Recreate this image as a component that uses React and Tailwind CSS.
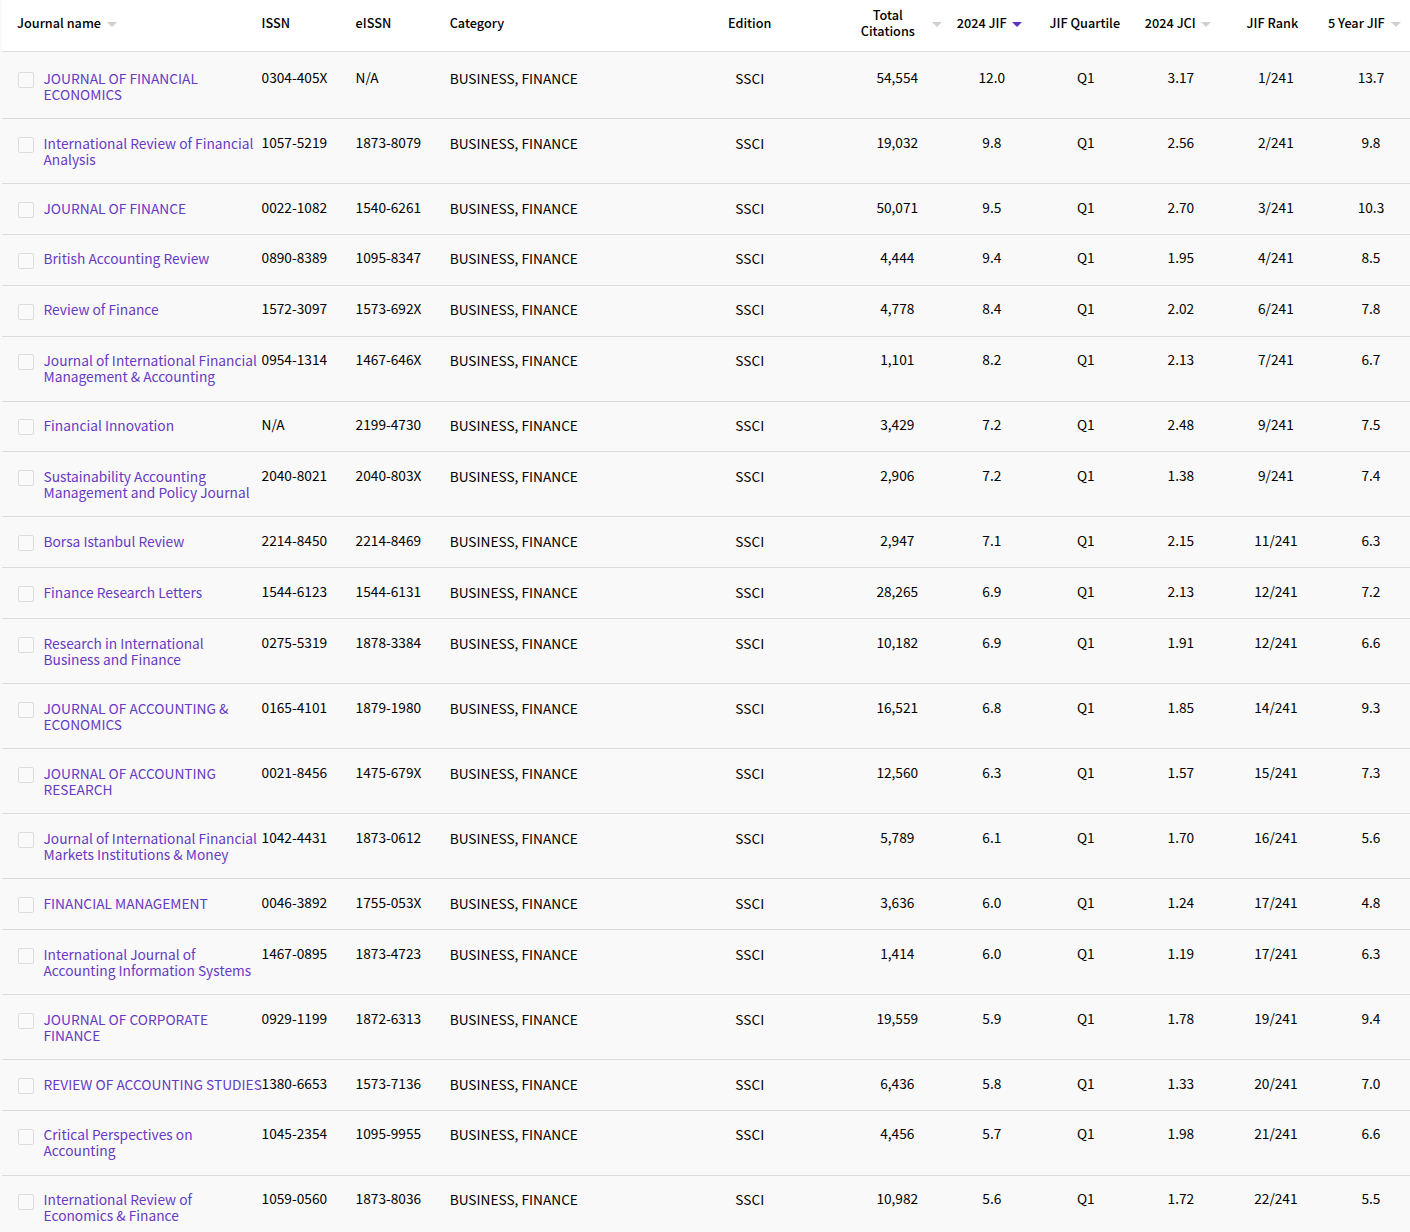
import React from "react";

const rows = [
  ["JOURNAL OF FINANCIAL ECONOMICS", "0304-405X", "N/A", "54,554", "12.0", "3.17", "1/241", "13.7", "h-[67px]", "pt-[17px]"],
  ["International Review of Financial Analysis", "1057-5219", "1873-8079", "19,032", "9.8", "2.56", "2/241", "9.8", "h-[65px]", "pt-[15px]"],
  ["JOURNAL OF FINANCE", "0022-1082", "1540-6261", "50,071", "9.5", "2.70", "3/241", "10.3", "h-[51px]", "pt-[15px]"],
  ["British Accounting Review", "0890-8389", "1095-8347", "4,444", "9.4", "1.95", "4/241", "8.5", "h-[51px]", "pt-[14px]", "mt-[4px]"],
  ["Review of Finance", "1572-3097", "1573-692X", "4,778", "8.4", "2.02", "6/241", "7.8", "h-[51px]", "pt-[14px]", "mt-[4px]"],
  ["Journal of International Financial Management & Accounting", "0954-1314", "1467-646X", "1,101", "8.2", "2.13", "7/241", "6.7", "h-[65px]", "pt-[14px]"],
  ["Financial Innovation", "N/A", "2199-4730", "3,429", "7.2", "2.48", "9/241", "7.5", "h-[50px]", "pt-[14px]"],
  ["Sustainability Accounting Management and Policy Journal", "2040-8021", "2040-803X", "2,906", "7.2", "1.38", "9/241", "7.4", "h-[65px]", "pt-[15px]"],
  ["Borsa Istanbul Review", "2214-8450", "2214-8469", "2,947", "7.1", "2.15", "11/241", "6.3", "h-[51px]", "pt-[15px]"],
  ["Finance Research Letters", "1544-6123", "1544-6131", "28,265", "6.9", "2.13", "12/241", "7.2", "h-[51px]", "pt-[15px]"],
  ["Research in International Business and Finance", "0275-5319", "1878-3384", "10,182", "6.9", "1.91", "12/241", "6.6", "h-[65px]", "pt-[15px]"],
  ["JOURNAL OF ACCOUNTING & ECONOMICS", "0165-4101", "1879-1980", "16,521", "6.8", "1.85", "14/241", "9.3", "h-[65px]", "pt-[15px]"],
  ["JOURNAL OF ACCOUNTING RESEARCH", "0021-8456", "1475-679X", "12,560", "6.3", "1.57", "15/241", "7.3", "h-[65px]", "pt-[15px]"],
  ["Journal of International Financial Markets Institutions & Money", "1042-4431", "1873-0612", "5,789", "6.1", "1.70", "16/241", "5.6", "h-[65px]", "pt-[15px]"],
  ["FINANCIAL MANAGEMENT", "0046-3892", "1755-053X", "3,636", "6.0", "1.24", "17/241", "4.8", "h-[51px]", "pt-[15px]"],
  ["International Journal of Accounting Information Systems", "1467-0895", "1873-4723", "1,414", "6.0", "1.19", "17/241", "6.3", "h-[65px]", "pt-[15px]"],
  ["JOURNAL OF CORPORATE FINANCE", "0929-1199", "1872-6313", "19,559", "5.9", "1.78", "19/241", "9.4", "h-[65px]", "pt-[15px]"],
  ["REVIEW OF ACCOUNTING STUDIES", "1380-6653", "1573-7136", "6,436", "5.8", "1.33", "20/241", "7.0", "h-[51px]", "pt-[15px]"],
  ["Critical Perspectives on Accounting", "1045-2354", "1095-9955", "4,456", "5.7", "1.98", "21/241", "6.6", "h-[65px]", "pt-[14px]", "mt-[4px]"],
  ["International Review of Economics & Finance", "1059-0560", "1873-8036", "10,982", "5.6", "1.72", "22/241", "5.5", "h-[65px]", "pt-[14px]", "mt-[4px]"],
];

const Caret = ({ active }) => (
  <span
    className={`mt-[2px] inline-block h-0 w-0 border-x-[5px] border-t-[5px] border-x-transparent ${active ? "border-t-[#5e33bf]" : "border-t-[#d0d0d0]"}`}
  />
);

const App = () => {
  return (
    <div className="h-[1232px] w-[1410px] overflow-hidden bg-[#f9f9f9] font-['Noto_Sans_CJK_SC',sans-serif] text-[13.7px] leading-4 text-black">
      <div className="h-[51px] w-full">
        <div className="ml-[2px] h-[51px] bg-white" />
      </div>
      <table className="-mt-[51px] ml-[1.5px] w-[1408.5px] table-fixed border-collapse">
        <colgroup>
          <col className="w-[260px]" />
          <col className="w-[94px]" />
          <col className="w-[94px]" />
          <col className="w-[250px]" />
          <col className="w-[98px]" />
          <col className="w-[147px]" />
          <col className="w-[94px]" />
          <col className="w-[94px]" />
          <col className="w-[95px]" />
          <col className="w-[95px]" />
          <col className="w-[87px]" />
        </colgroup>
        <thead>
          <tr className="h-[51px] border-b border-[#dddddd] text-[12.7px] text-black">
            <th className="pb-[4px] pl-[15.5px] text-left font-medium">
              <div className="flex items-center gap-[5.5px]">
                Journal name <Caret />
              </div>
            </th>
            <th className="pb-[4px] text-left font-medium">ISSN</th>
            <th className="pb-[4px] text-left font-medium">eISSN</th>
            <th className="pb-[4px] text-left font-medium">Category</th>
            <th className="pb-[4px] pl-[2px] text-center font-medium">Edition</th>
            <th className="pb-[4px] pl-[63px] font-medium">
              <div className="flex items-center gap-[17px]">
                <span className="w-[54px] text-center">Total Citations</span>
                <Caret />
              </div>
            </th>
            <th className="pb-[4px] pl-[12px] font-medium">
              <div className="flex items-center gap-[5px]">
                2024 JIF <Caret active />
              </div>
            </th>
            <th className="pb-[4px] pr-[2px] text-center font-medium">JIF Quartile</th>
            <th className="pb-[4px] pl-[12px] font-medium">
              <div className="flex items-center gap-[5px]">
                2024 JCI <Caret />
              </div>
            </th>
            <th className="pb-[4px] pr-[6px] text-center font-medium">JIF Rank</th>
            <th className="pb-[4px] pl-[5px] font-medium">
              <div className="flex items-center gap-[6px]">
                5 Year JIF <Caret />
              </div>
            </th>
          </tr>
        </thead>
        <tbody>
          {rows.map((r) => (
            <tr key={r[0]} className={`border-b border-[#dddddd] align-top ${r[8]}`}>
              <td className={`pl-[16px] ${r[9]}`}>
                <div className="flex items-start">
                  <span className={`h-4 w-4 shrink-0 rounded-[2px] border border-[#dddddd] bg-[#fafafa] ${r[10] || "mt-[3px]"}`} />
                  <a className="ml-[10px] mt-px w-[218.6px] shrink-0 text-[13.75px] text-[#673ac4]">{r[0]}</a>
                </div>
              </td>
              <td className={r[9]}>{r[1]}</td>
              <td className={r[9]}>{r[2]}</td>
              <td className={r[9]}>
                <div className="mt-px">BUSINESS, FINANCE</div>
              </td>
              <td className={`pl-[2px] text-center ${r[9]}`}>
                <div className="mt-px">SSCI</div>
              </td>
              <td className={`pl-[52px] text-center ${r[9]}`}>{r[3]}</td>
              <td className={`text-center ${r[9]}`}>{r[4]}</td>
              <td className={`text-center ${r[9]}`}>Q1</td>
              <td className={`pl-px text-center ${r[9]}`}>{r[5]}</td>
              <td className={`pl-px text-center ${r[9]}`}>{r[6]}</td>
              <td className={`pl-[9px] text-center ${r[9]}`}>{r[7]}</td>
            </tr>
          ))}
        </tbody>
      </table>
    </div>
  );
};

export default App;
